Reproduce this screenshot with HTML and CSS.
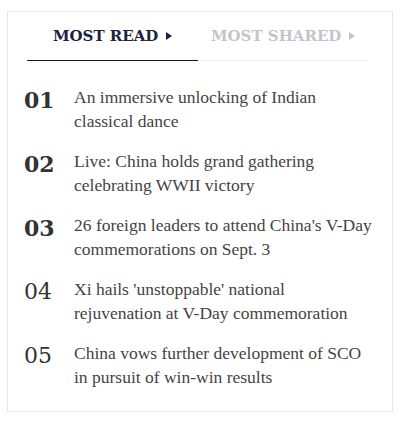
FILE: index.html
```html
<!DOCTYPE html>
<html lang="en">
<head>
    <meta charset="UTF-8">
    <meta name="viewport" content="width=device-width, initial-scale=1.0">
    <title>Most Read</title>
    <link rel="stylesheet" href="styles.css">
</head>
<body>
    <div class="top-box">
        <div class="tabs">
            <div class="tab active">MOST READ <svg class="arrow" width="6" height="8" viewBox="0 0 6 8"><path d="M0 0L6 4L0 8Z"/></svg></div>
            <div class="tab">MOST SHARED <svg class="arrow" width="6" height="8" viewBox="0 0 6 8"><path d="M0 0L6 4L0 8Z"/></svg></div>
        </div>

        <ul class="top-list">
            <li class="top-item">
                <span class="num bold">01</span>
                <a href="#">An immersive unlocking of Indian<br>classical dance</a>
            </li>
            <li class="top-item">
                <span class="num bold">02</span>
                <a href="#">Live: China holds grand gathering<br>celebrating WWII victory</a>
            </li>
            <li class="top-item">
                <span class="num bold">03</span>
                <a href="#">26 foreign leaders to attend China's V-Day<br>commemorations on Sept. 3</a>
            </li>
            <li class="top-item">
                <span class="num">04</span>
                <a href="#">Xi hails 'unstoppable' national<br>rejuvenation at V-Day commemoration</a>
            </li>
            <li class="top-item">
                <span class="num">05</span>
                <a href="#">China vows further development of SCO<br>in pursuit of win-win results</a>
            </li>
        </ul>
    </div>
</body>
</html>
```

FILE: styles.css
```css
* {
    box-sizing: border-box;
    margin: 0;
    padding: 0;
}
body {
    font-family: 'DejaVu Serif', Georgia, serif;
    background-color: #fff;
    padding: 11px 12px 0 7px;
}
.top-box {
    width: 386px;
    height: 401px;
    border: 1px solid #e6e7ec;
    padding: 0 10px 0 16px;
}
.tabs {
    display: flex;
    margin: 0 14px 0 3px;
    padding-top: 14px;
}
.tab {
    flex: 1;
    text-align: center;
    font-weight: bold;
    font-size: 15px;
    line-height: 20px;
    padding-bottom: 14px;
    color: #c3c5cc;
    border-bottom: 1px solid #f0f0f3;
}
.tab.active {
    color: #1c2240;
    border-bottom: 1px solid #1a1440;
}
.arrow {
    fill: currentColor;
    margin-left: 2px;
    vertical-align: 1px;
}
.top-list {
    list-style: none;
    padding-top: 24px;
}
.top-item {
    display: flex;
    margin-bottom: 16px;
}
.num {
    width: 50px;
    flex-shrink: 0;
    font-size: 22px;
    line-height: 26px;
    padding-top: 2px;
    color: #333;
}
.num.bold {
    font-weight: bold;
}
.top-item a {
    font-family: 'Liberation Serif', 'Times New Roman', serif;
    font-size: 17.5px;
    line-height: 24px;
    color: #444;
    text-decoration: none;
    white-space: nowrap;
}
```
